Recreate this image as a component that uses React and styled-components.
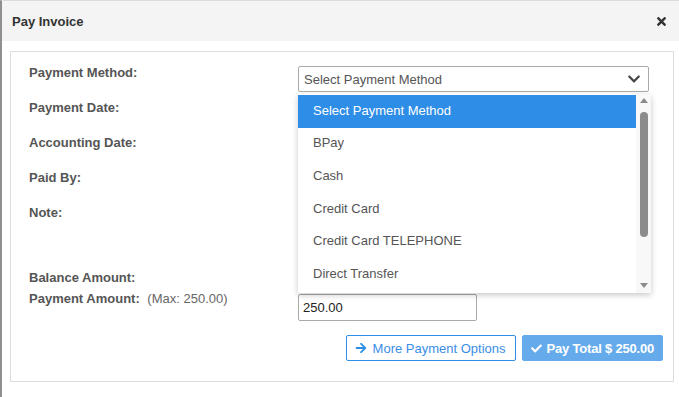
import React from 'react'
import styled, { createGlobalStyle } from 'styled-components'
import { FaArrowRight, FaCheck, FaTimes, FaChevronDown } from 'react-icons/fa'

const Global = createGlobalStyle`
    body {
        margin: 0;
        background: #fff;
        font-family: "Liberation Sans", Arial, sans-serif;
    }
`

const methods = [
    'Select Payment Method',
    'BPay',
    'Cash',
    'Credit Card',
    'Credit Card TELEPHONE',
    'Direct Transfer',
]

function App() {
    return (
        <>
            <Global />
            <Modal>
                <Header>
                    <Title>Pay Invoice</Title>
                    <Close><FaTimes size={13} /></Close>
                </Header>

                <Body>
                    <Panel>
                        <Row>
                            <Label>Payment Method:</Label>
                            <SelectWrap>
                                <Select>
                                    <span>Select Payment Method</span>
                                    <FaChevronDown size={14} />
                                </Select>
                                <Dropdown>
                                    <Options>
                                        {methods.map((m, i) => (
                                            <Option key={m} active={i === 0}>{m}</Option>
                                        ))}
                                    </Options>
                                    <Scrollbar>
                                        <Arrow />
                                        <Thumb />
                                        <Arrow down />
                                    </Scrollbar>
                                </Dropdown>
                            </SelectWrap>
                        </Row>
                        <Row><Label>Payment Date:</Label></Row>
                        <Row><Label>Accounting Date:</Label></Row>
                        <Row><Label>Paid By:</Label></Row>
                        <Row height={65}><Label>Note:</Label></Row>
                        <Row height={21}><Label>Balance Amount:</Label></Row>
                        <Row height={31}>
                            <Label>Payment Amount: <Max>(Max: 250.00)</Max></Label>
                            <Amount defaultValue="250.00" />
                        </Row>

                        <Actions>
                            <Button>
                                <FaArrowRight size={12} />
                                More Payment Options
                            </Button>
                            <Button primary>
                                <FaCheck size={11} />
                                Pay Total $ 250.00
                            </Button>
                        </Actions>
                    </Panel>
                </Body>
            </Modal>
        </>
    )
}

export default App

const Modal = styled.div`
    width: 679px;
    height: 397px;
    box-sizing: border-box;
    border-top: 1px solid #dcdcdc;
    border-left: 2px solid #8f8f8f;
    display: flex;
    flex-direction: column;
    overflow: hidden;
`

const Header = styled.div`
    height: 40px;
    flex-shrink: 0;
    background: #f4f4f4;
    display: flex;
    align-items: center;
    justify-content: space-between;
    padding: 0 11px 0 10px;
`

const Title = styled.div`
    font-size: 13px;
    font-weight: bold;
    color: #333;
`

const Close = styled.div`
    display: flex;
    color: #333;
`

const Body = styled.div`
    padding: 10px 5px 0 8px;
`

const Panel = styled.div`
    border: 1px solid #ddd;
    padding: 12px 10px 20px 18px;
`

const Row = styled.div`
    display: grid;
    grid-template-columns: 269px 351px;
    align-items: start;
    height: ${p => p.height || 35}px;
`

const Label = styled.div`
    font-size: 13px;
    font-weight: bold;
    line-height: 18px;
    color: #555;
`

const Max = styled.span`
    font-weight: normal;
    color: #666;
    margin-left: 4px;
`

const SelectWrap = styled.div`
    position: relative;
    margin-top: 2px;
`

const Select = styled.div`
    height: 26px;
    box-sizing: border-box;
    border: 1px solid #aaa;
    border-radius: 2px;
    display: flex;
    align-items: center;
    justify-content: space-between;
    padding: 0 7px 0 5px;
    font-size: 13px;
    color: #555;

    > svg {
        color: #444;
    }
`

const Dropdown = styled.div`
    position: absolute;
    top: 28px;
    left: 0;
    width: 353px;
    height: 199px;
    background: #fff;
    box-shadow: 0 2px 6px rgba(0, 0, 0, 0.22);
    display: flex;
    z-index: 5;
`

const Options = styled.div`
    flex: 1;
    padding-top: 1px;
`

const Option = styled.div`
    height: 32.6px;
    display: flex;
    align-items: center;
    padding: 0 0 2px 15px;
    box-sizing: border-box;
    font-size: 13px;
    color: ${p => p.active ? '#fff' : '#555'};
    background: ${p => p.active ? '#2e8de6' : 'transparent'};
`

const Scrollbar = styled.div`
    width: 15px;
    background: #f8f8f8;
    display: flex;
    flex-direction: column;
    align-items: center;
    padding: 4px 0 5px;
    box-sizing: border-box;
`

const Arrow = styled.div`
    width: 0;
    height: 0;
    border-left: 4px solid transparent;
    border-right: 4px solid transparent;
    ${p => p.down
        ? 'border-top: 5px solid #8a8a8a; margin-top: auto;'
        : 'border-bottom: 5px solid #8a8a8a;'}
`

const Thumb = styled.div`
    width: 8px;
    height: 125px;
    margin-top: 9px;
    border-radius: 4px;
    background: #8c8c8c;
`

const Amount = styled.input`
    width: 179px;
    height: 27px;
    margin: 4px 0 0;
    box-sizing: border-box;
    border: 1px solid #aaa;
    border-radius: 2px;
    padding: 0 4px;
    font-family: inherit;
    font-size: 13px;
    color: #222;
    outline: none;
`

const Actions = styled.div`
    display: flex;
    justify-content: flex-end;
    gap: 6px;
    margin-top: 14px;
`

const Button = styled.div`
    height: 26px;
    box-sizing: border-box;
    display: inline-flex;
    align-items: center;
    gap: ${p => p.primary ? 5 : 6}px;
    padding: ${p => p.primary ? '0 8px 0 8px' : '0 9px 0 8px'};
    border-radius: 2px;
    font-size: 13px;
    letter-spacing: ${p => p.primary ? '-0.2px' : '0'};
    border: 1px solid ${p => p.primary ? '#65abeb' : '#2f8ee5'};
    background: ${p => p.primary ? '#65abeb' : '#fff'};
    color: ${p => p.primary ? '#fff' : '#3a8ee6'};
    font-weight: ${p => p.primary ? 'bold' : 'normal'};

    > svg {
        color: ${p => p.primary ? '#fff' : '#2d8fe3'};
    }
`
